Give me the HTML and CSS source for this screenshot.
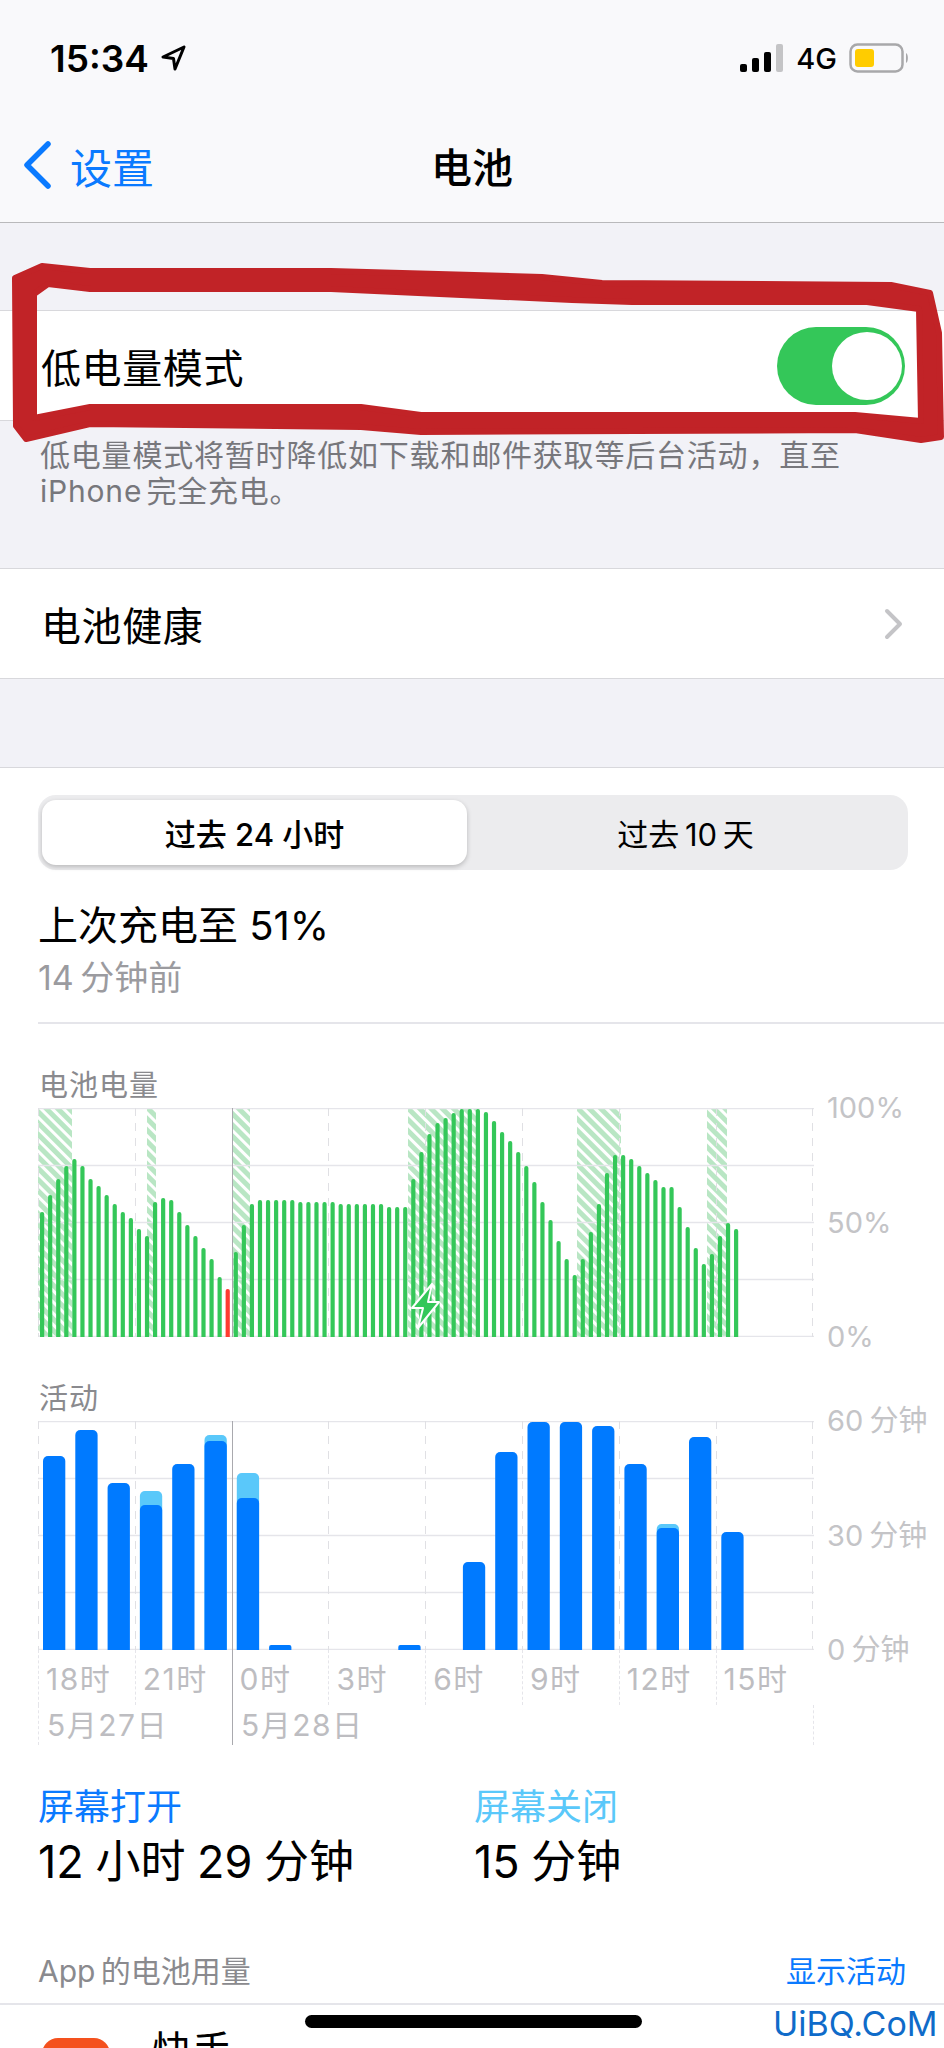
FILE: index.html
```html
<!DOCTYPE html>
<html lang="zh-CN">
<head>
    <meta charset="UTF-8">
    <meta name="viewport" content="width=device-width, initial-scale=1.0">
    <title>电池</title>
    <link rel="stylesheet" href="styles.css">
</head>
<body>
    <div class="header">
        <div class="status-bar">
            <div class="status-left">
                <span class="time">15:34</span>
                <svg class="loc-icon" width="25" height="26" viewBox="0 0 25 26"><path d="M23 2 L2 12 L12.5 13.5 L14 24 Z" fill="none" stroke="#000" stroke-width="3" stroke-linejoin="round"/></svg>
            </div>
            <div class="status-right">
                <svg width="44" height="28" viewBox="0 0 44 28">
                    <rect x="0" y="20" width="7" height="8" rx="2" fill="#000"/>
                    <rect x="12" y="14" width="7" height="14" rx="2" fill="#000"/>
                    <rect x="24" y="8" width="7" height="20" rx="2" fill="#000"/>
                    <rect x="36" y="0" width="7" height="28" rx="2" fill="#c4c4c6"/>
                </svg>
                <span class="net">4G</span>
                <svg width="60" height="30" viewBox="0 0 60 30">
                    <rect x="1.5" y="1.5" width="52" height="27" rx="7" fill="none" stroke="#a8a8aa" stroke-width="2.5"/>
                    <rect x="6" y="6" width="19" height="18" rx="3" fill="#ffcc00"/>
                    <path d="M57 10 C59.5 11 59.5 19 57 20 Z" fill="#a8a8aa"/>
                </svg>
            </div>
        </div>
        <div class="nav">
            <div class="nav-back">
                <svg width="30" height="48" viewBox="0 0 30 48"><path d="M26 3 L5 24 L26 45" fill="none" stroke="#0a7aff" stroke-width="5.5" stroke-linecap="round" stroke-linejoin="round"/></svg>
                <span>设置</span>
            </div>
            <div class="nav-title">电池</div>
        </div>
    </div>

    <div class="row row-low-power">
        <span>低电量模式</span>
        <div class="switch"><div class="knob"></div></div>
    </div>
    <div class="note">低电量模式将暂时降低如下载和邮件获取等后台活动，直至<br>iPhone 完全充电。</div>

    <div class="row row-health">
        <span>电池健康</span>
        <svg width="20" height="32" viewBox="0 0 20 32"><path d="M3 3 L16 16 L3 29" fill="none" stroke="#c4c4c7" stroke-width="4" stroke-linecap="round" stroke-linejoin="round"/></svg>
    </div>

    <div class="panel">
        <div class="segmented">
            <div class="seg seg-active">过去 24 小时</div>
            <div class="seg">过去 10 天</div>
        </div>

        <div class="last-charge">上次充电至 51%</div>
        <div class="last-ago">14 分钟前</div>
        <div class="divider"></div>

        <div class="chart-title">电池电量</div>
        <div class="chart">
            <svg class="plot" id="batteryPlot" width="776" height="229" viewBox="0 0 776 229"></svg>
            <div class="y-axis">
                <span>100%</span>
                <span>50%</span>
                <span>0%</span>
            </div>
        </div>

        <div class="chart-title">活动</div>
        <div class="chart">
            <svg class="plot" id="activityPlot" width="776" height="229" viewBox="0 0 776 229"></svg>
            <div class="y-axis">
                <span>60 分钟</span>
                <span>30 分钟</span>
                <span>0 分钟</span>
            </div>
        </div>

        <div class="hours">
            <div class="hour">18时</div>
            <div class="hour">21时</div>
            <div class="hour hour-midnight">0时</div>
            <div class="hour">3时</div>
            <div class="hour">6时</div>
            <div class="hour">9时</div>
            <div class="hour">12时</div>
            <div class="hour">15时</div>
        </div>
        <div class="dates">
            <div class="date">5月27日</div>
            <div class="date date-next">5月28日</div>
        </div>

        <div class="stats">
            <div class="stat stat-on">
                <div class="stat-label">屏幕打开</div>
                <div class="stat-value">12 小时 29 分钟</div>
            </div>
            <div class="stat stat-off">
                <div class="stat-label">屏幕关闭</div>
                <div class="stat-value">15 分钟</div>
            </div>
        </div>

        <div class="usage-head">
            <span>App 的电池用量</span>
            <span class="usage-link">显示活动</span>
        </div>
    </div>

    <div class="app-row">
        <div class="app-icon"></div>
        <div class="app-name">快手</div>
    </div>

    <div class="home-bar"></div>
    <div class="watermark">UiBQ.CoM</div>

    <svg class="marker" width="944" height="200" viewBox="0 255 944 200">
        <path fill-rule="evenodd" fill="#c12327" stroke="#c12327" stroke-width="6" stroke-linejoin="round" d="M15 278 L42 266 L90 271 L331 271 L542 277 L602 283 L891 285 L930 293 L939 333 L941 437 L921 440 L855 430 L421 432 L361 427 L90 424 L26 439 L16 426 Z M34 294 L48 284 L90 289 L331 289 L572 300 L632 302 L867 302 L919 309 L921 421 L855 415 L421 415 L361 407 L90 407 L34 418 Z"/>
    </svg>

    <script src="charts.js"></script>
</body>
</html>
```

FILE: styles.css
```css
* { box-sizing: border-box; }
html, body { margin: 0; height: 2048px; overflow: hidden; }
body { position: relative; width: 944px; background: #f2f2f7; color: #000; font-family: Inter, "Noto Sans CJK SC", sans-serif; }

.header { height: 223px; background: #f9f9fb; border-bottom: 1px solid #b9b9bb; }
.status-bar { height: 116px; display: flex; justify-content: space-between; align-items: center; padding: 0 35px 0 50px; }
.status-left { display: flex; align-items: center; gap: 12px; }
.time { font-size: 37px; font-weight: 600; }
.status-right { display: flex; align-items: center; gap: 12px; }
.net { font-size: 29px; font-weight: 500; }
.nav { height: 98px; display: grid; grid-template-columns: 1fr auto 1fr; align-items: center; padding: 0 22px; }
.nav-back { display: flex; align-items: center; gap: 18px; color: #0a7aff; font-size: 42px; }
.nav-title { font-size: 41px; font-weight: 500; }

.row { display: flex; justify-content: space-between; align-items: center; background: #fff; border-top: 1px solid #d8d8dc; border-bottom: 1px solid #d8d8dc; font-size: 40px; }
.row-low-power { margin-top: 87px; height: 111px; padding: 0 39px 0 41px; letter-spacing: 0.6px; }
.switch { width: 128px; height: 78px; border-radius: 39px; background: #34c759; display: flex; align-items: center; justify-content: flex-end; padding-right: 3px; }
.knob { width: 70px; height: 68px; border-radius: 50%; background: #fff; }
.note { height: 147px; padding: 16px 40px 0; font-size: 30px; line-height: 36px; letter-spacing: 0.8px; word-spacing: -5px; color: #77777c; }
.row-health { height: 111px; padding: 0 40px 0 41px; letter-spacing: 0.6px; }

.panel { margin-top: 88px; height: 1236px; background: #fff; border-top: 1px solid #d8d8dc; padding-top: 27px; }
.segmented { margin: 0 36px 0 38px; height: 75px; padding: 5px 4px; border-radius: 18px; background: #ececee; display: flex; }
.seg { flex: 1; display: flex; align-items: center; justify-content: center; font-size: 31px; word-spacing: -3px; }
.seg-active { flex: 0 0 425px; background: #fff; border-radius: 14px; font-weight: 500; word-spacing: 0; box-shadow: 0 2px 5px rgba(0,0,0,0.22); }
.last-charge { margin: 30px 0 0 38px; height: 52px; line-height: 52px; font-size: 40px; }
.last-ago { margin: 2px 0 0 38px; height: 48px; line-height: 48px; font-size: 34px; word-spacing: -3px; color: #9b9b9f; }
.divider { margin: 20px 0 0 38px; height: 2px; background: #e5e5ea; }

.chart-title { margin: 44px 0 4px 39px; height: 36px; line-height: 36px; font-size: 29px; letter-spacing: 1px; color: #8a8a8e; }
.chart { display: flex; align-items: flex-start; margin-left: 38px; height: 229px; }
.plot { display: block; flex: none; }
.y-axis { height: 259px; margin-top: -15px; padding-left: 13px; display: flex; flex-direction: column; justify-content: space-between; font-size: 29px; line-height: 30px; word-spacing: -2px; color: #c4c4c7; white-space: nowrap; }

.hours { display: grid; grid-template-columns: repeat(8, 96.8px); margin-left: 38px; height: 55px; }
.hour { border-left: 1px dashed #e5e5ea; padding: 11px 0 0 7px; font-size: 30px; letter-spacing: 1.5px; line-height: 36px; color: #bdbdc1; }
.hour-midnight { border-left: 1px solid #a9a9ae; }
.dates { display: flex; margin-left: 38px; width: 776px; height: 40px; border-left: 1px dashed #e5e5ea; border-right: 1px dashed #e5e5ea; font-size: 30px; letter-spacing: 1.5px; line-height: 40px; color: #bdbdc1; }
.date { width: 193px; padding-left: 8px; }
.date-next { border-left: 1px solid #a9a9ae; padding-left: 8px; }

.stats { display: flex; margin: 42px 0 0 38px; }
.stat { width: 436px; }
.stat-label { height: 40px; line-height: 40px; font-size: 36px; }
.stat-value { margin-top: 11px; height: 48px; line-height: 48px; font-size: 45px; word-spacing: -1px; }
.stat-on .stat-label { color: #0a7aff; }
.stat-off .stat-label { color: #5ac8fa; }

.usage-head { display: flex; justify-content: space-between; margin: 67px 38px 0; height: 36px; line-height: 36px; font-size: 30px; word-spacing: -3px; color: #8a8a8e; }
.usage-link { color: #0a7aff; }

.app-row { background: #fff; height: 60px; border-top: 2px solid #e5e5ea; display: flex; padding-left: 42px; overflow: hidden; }
.app-icon { flex: none; width: 68px; height: 68px; margin-top: 33px; border-radius: 16px; background: #f4511e; }
.app-name { margin-left: 42px; padding-top: 18px; font-size: 40px; line-height: 56px; }

.home-bar { position: absolute; left: 305px; top: 2015px; width: 337px; height: 13px; border-radius: 7px; background: #000; }
.watermark { position: absolute; left: 773px; top: 2002px; font-size: 34px; line-height: 44px; color: #0f6bc9; }
.marker { position: absolute; left: 0; top: 255px; }
```

FILE: charts.js
```js
const SVG_NS = 'http://www.w3.org/2000/svg';
const BASE = 228;
const GREEN = '#34c759';
const RED = '#ff3b30';
const BLUE = '#007aff';
const CYAN = '#5ac8fa';

// bar heights in px, oldest first
const batteryBars = [
    124, 141, 157, 170, 177, 170, 157, 150, 141, 132, 124, 118, 107, 100,
    134, 138, 136, 124, 111, 100, 88, 77, 59, 47, 84, 111, 132,
    136, 136, 136, 136, 136, 134, 134, 134, 134, 134,
    132, 132, 132, 132, 132, 132, 129, 129, 129,
    157, 184, 202, 213, 218, 223, 227, 227, 227, 224, 215, 204, 195, 184,
    170, 154, 134, 116, 95, 77, 61, 77, 104, 132, 163, 181, 181, 177, 170,
    163, 156, 149, 149, 129, 109, 88, 72, 82, 100, 113, 107
];
const LOW_BAR = 23;

// [x, width] of the charging periods
const chargeZones = [[0, 34], [109, 9], [194, 18], [370, 68], [539, 44], [669, 20]];

// [screen on, screen on + off], one per hour slot
const activityBars = [
    [193], [219], [166], [144, 158], [185], [208, 214], [151, 176], [4],
    [0], [0], [0], [4], [0], [87], [197], [227], [227], [223], [185], [121, 125], [212], [117]
];

function el(parent, name, attrs) {
    const node = document.createElementNS(SVG_NS, name);
    for (const key in attrs) node.setAttribute(key, attrs[key]);
    parent.appendChild(node);
    return node;
}

function drawGrid(svg) {
    [0, 57, 114, 171, 228].forEach(y => {
        el(svg, 'line', { x1: 0, x2: 776, y1: y + 0.5, y2: y + 0.5, stroke: '#e5e5ea', 'stroke-width': 1.5 });
    });
    for (let i = 0; i <= 8; i++) {
        const x = Math.round(i * 96.8) + 0.5;
        const midnight = i === 2;
        el(svg, 'line', {
            x1: x, x2: x, y1: 0, y2: 229,
            stroke: midnight ? '#a9a9ae' : '#e0e0e4',
            'stroke-dasharray': midnight ? 'none' : '8 7'
        });
    }
}

function addClip(svg, id) {
    const clip = el(el(svg, 'defs', {}), 'clipPath', { id: id });
    el(clip, 'rect', { x: 0, y: 0, width: 776, height: BASE + 1 });
}

function drawBattery(svg) {
    const defs = el(svg, 'defs', {});
    const hatch = el(defs, 'pattern', {
        id: 'hatch', width: 8, height: 8,
        patternUnits: 'userSpaceOnUse', patternTransform: 'rotate(-45)'
    });
    el(hatch, 'rect', { width: 8, height: 8, fill: '#b9e6c4' });
    el(hatch, 'rect', { width: 3, height: 8, fill: '#fff' });

    chargeZones.forEach(z => {
        el(svg, 'rect', { x: z[0], y: 0, width: z[1], height: BASE, fill: 'url(#hatch)' });
    });
    drawGrid(svg);
    addClip(svg, 'batteryClip');
    const group = el(svg, 'g', { 'clip-path': 'url(#batteryClip)' });
    batteryBars.forEach((h, i) => {
        el(group, 'rect', {
            x: 2 + i * 8.07, y: BASE - h, width: 4.2, height: h + 4, rx: 2,
            fill: i === LOW_BAR ? RED : GREEN
        });
    });
    // charging bolt
    el(svg, 'path', {
        d: 'M394 176 L374 200 L385 200 L380 220 L401 194 L390 194 Z',
        fill: GREEN, stroke: '#fff', 'stroke-width': 2, 'stroke-linejoin': 'round'
    });
}

function drawActivity(svg) {
    drawGrid(svg);
    addClip(svg, 'activityClip');
    const group = el(svg, 'g', { 'clip-path': 'url(#activityClip)' });
    activityBars.forEach((bar, i) => {
        const x = 5 + i * 32.3;
        if (bar[1]) {
            el(group, 'rect', { x: x, y: BASE - bar[1], width: 22.3, height: bar[1] + 6, rx: 5, fill: CYAN });
        }
        if (bar[0]) {
            el(group, 'rect', { x: x, y: BASE - bar[0], width: 22.3, height: bar[0] + 6, rx: bar[0] < 8 ? 2 : 5, fill: BLUE });
        }
    });
}

drawBattery(document.getElementById('batteryPlot'));
drawActivity(document.getElementById('activityPlot'));
```
